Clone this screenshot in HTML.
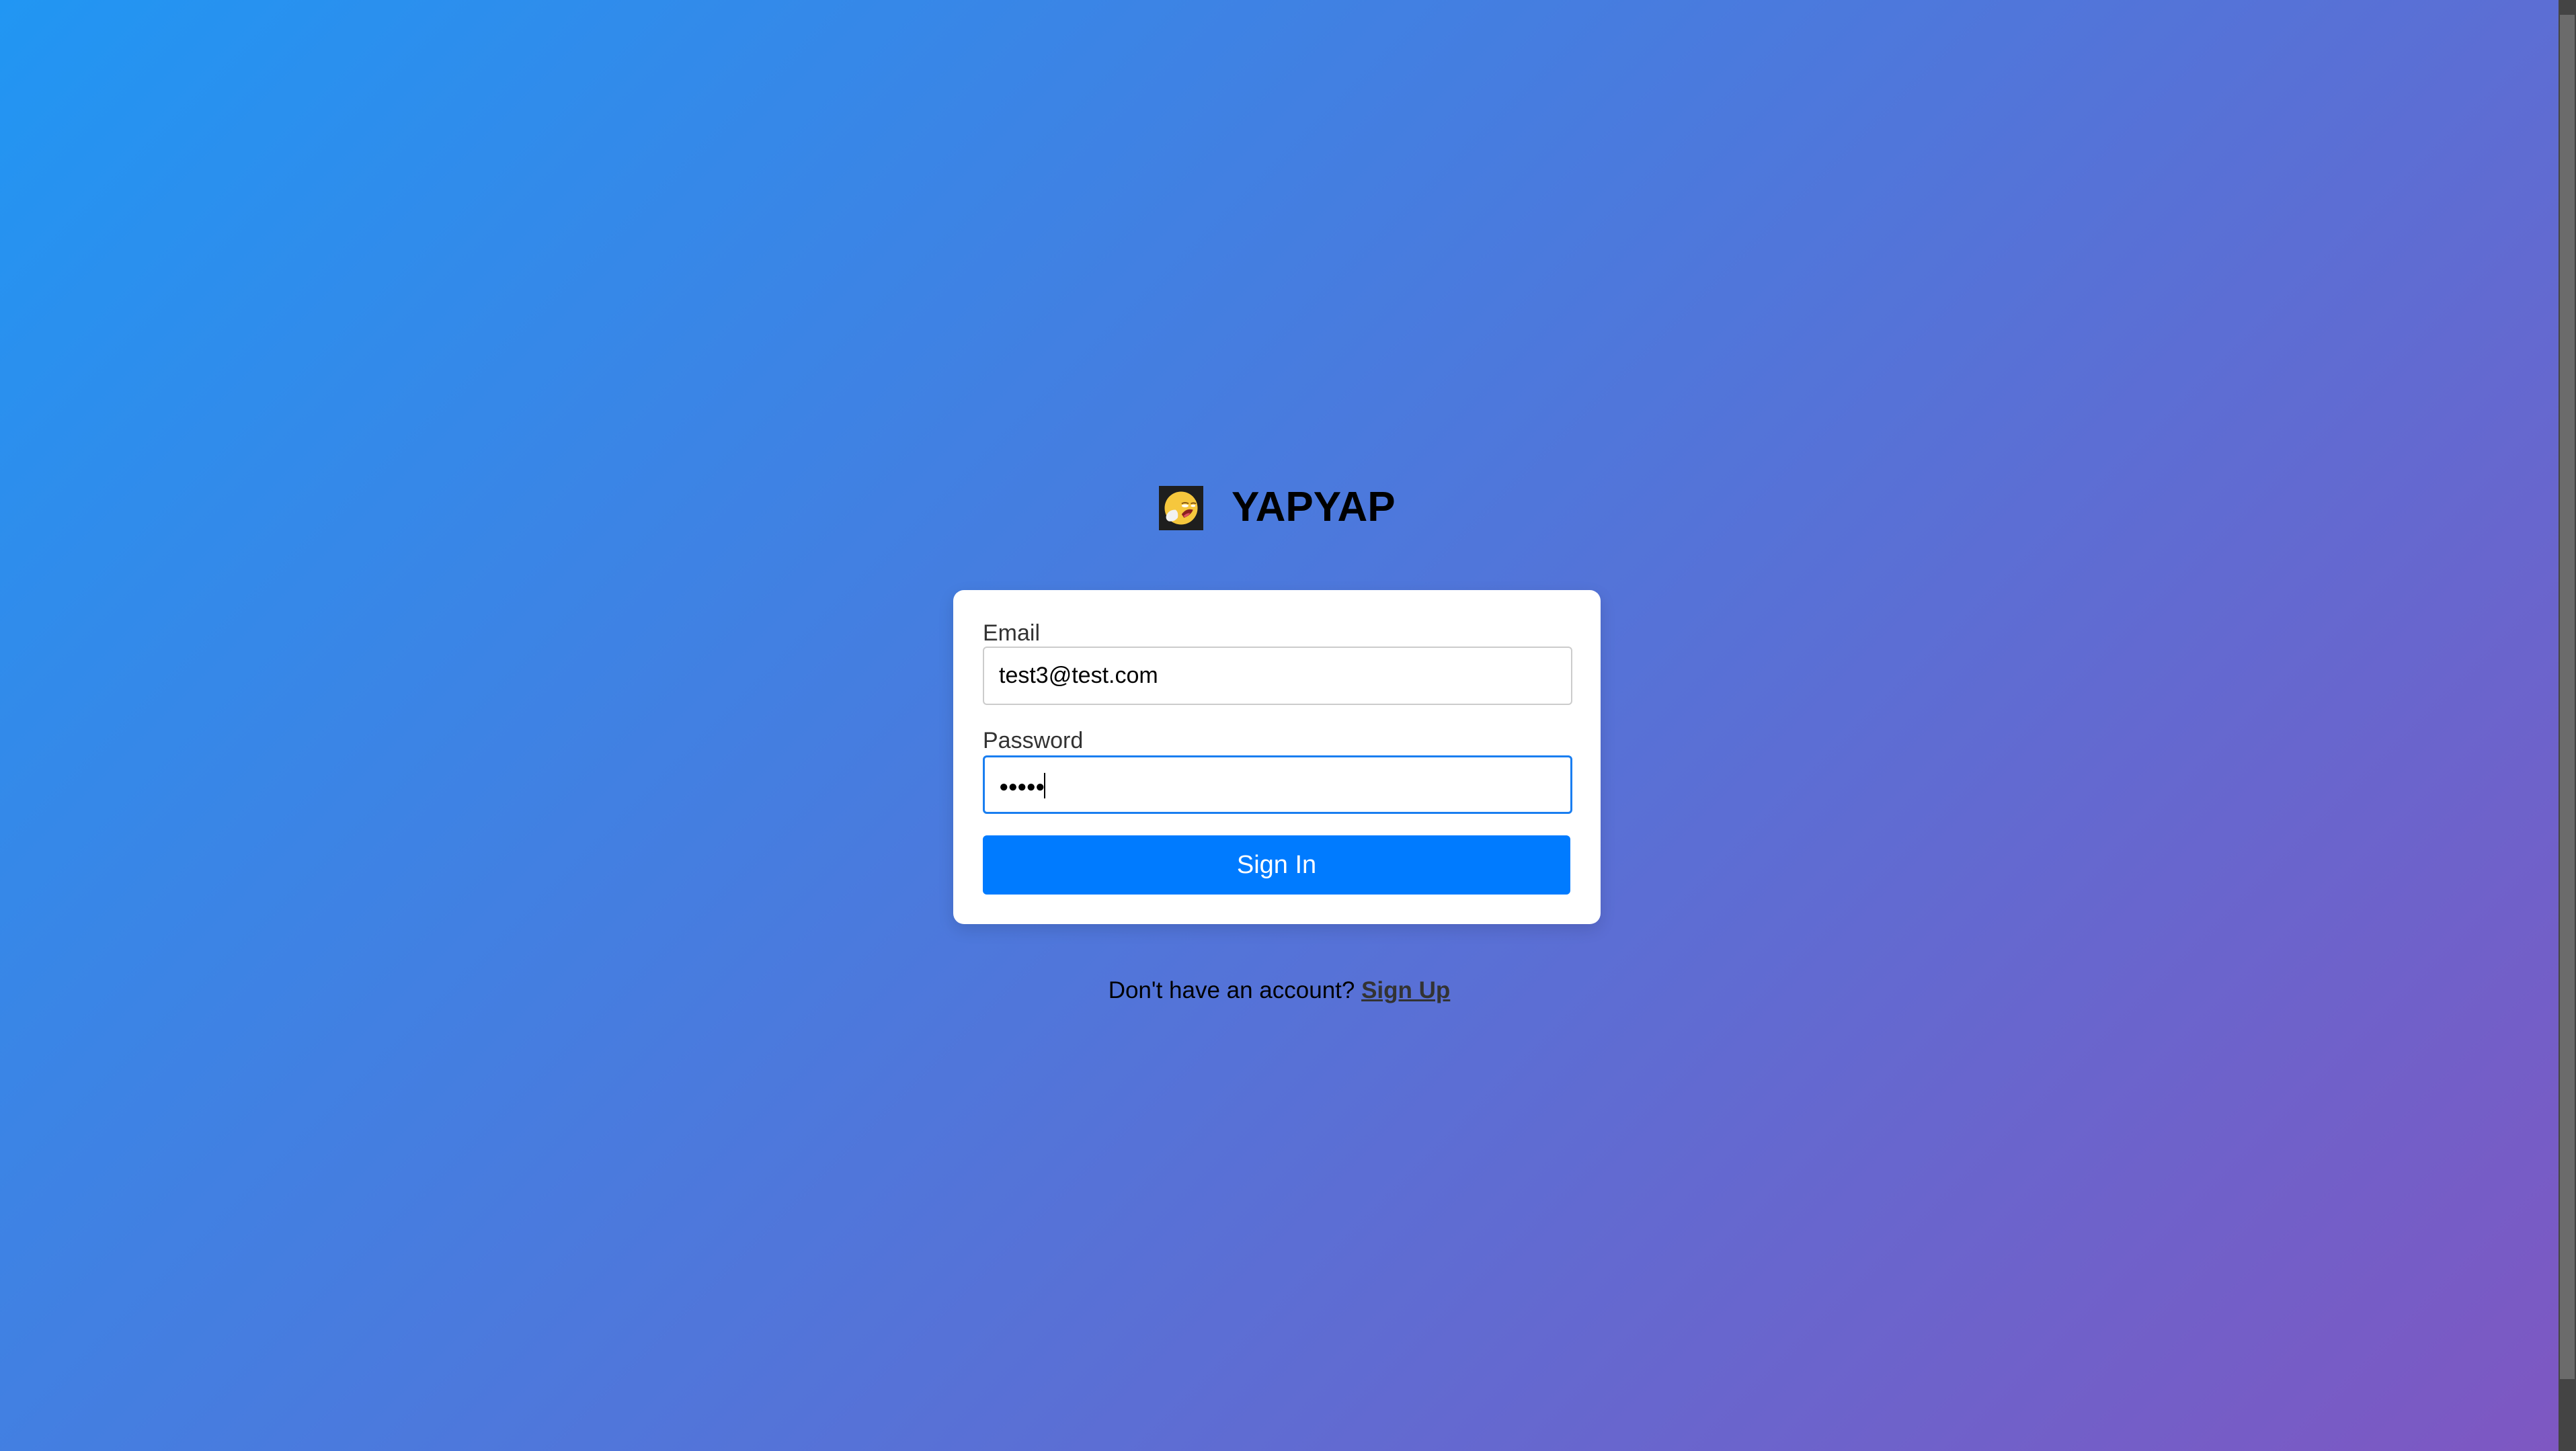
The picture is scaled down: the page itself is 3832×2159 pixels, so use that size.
<!DOCTYPE html>
<html><head><meta charset="utf-8"><style>
*{box-sizing:border-box;margin:0;padding:0}
html,body{width:3832px;height:2159px;overflow:hidden}
body{font-family:"Liberation Sans",Arial,sans-serif;position:relative;background:#444}
.bg{position:absolute;left:0;top:0;width:3806px;height:2159px;background:linear-gradient(135deg,#2196F3 0%,#7E57C2 100%)}
.sb{position:absolute;left:3806px;top:0;width:26px;height:2159px;background:#444}
.thumb{position:absolute;left:3808px;top:22px;width:22px;height:2030px;background:#6b6b6b}
.logo{position:absolute;left:1724px;top:723px;width:66px;height:66px;background:#1e1e1e}
.title{position:absolute;left:1832px;top:712px;font-size:62px;font-weight:bold;color:#000;line-height:86px}
.card{position:absolute;left:1418px;top:878px;width:963px;height:497px;background:#fff;border-radius:16px;box-shadow:0 8px 24px rgba(0,0,0,.12)}
.lbl{position:absolute;left:1462px;font-size:34px;color:#333;line-height:40px}
.inp{position:absolute;left:1462px;width:877px;height:87px;border:2px solid #ccc;border-radius:6px;background:#fff;font-size:34px;color:#000;padding-left:22px;line-height:83px}
.inp.f{border:3px solid #1a7ef0;padding-left:21px;line-height:81px}
.btn{position:absolute;left:1462px;top:1243px;width:874px;height:88px;background:#007bff;border-radius:6px;color:#fff;font-size:38px;text-align:center;line-height:88px}
.foot{position:absolute;left:0;width:3806px;top:1452px;text-align:center;font-size:35px;color:#000;line-height:44px}
.foot b{color:#333;text-decoration:underline}
</style></head><body>
<div class="bg"></div>
<div class="sb"></div><div class="thumb"></div>
<div class="logo"><svg width="66" height="66" viewBox="0 0 78 78">
<circle cx="39" cy="39" r="29" fill="#f6c73d"/>
<path d="M40 31 q6-3 12 0 M56 31 q5-2 9 0" stroke="#7a4a10" stroke-width="2" fill="none"/>
<ellipse cx="46" cy="35" rx="6" ry="2.5" fill="#fff"/><ellipse cx="60" cy="35" rx="4" ry="2" fill="#fff"/>
<path d="M40 50 q8-12 20-8 q-4 10-16 14z" fill="#8a1f1f"/><path d="M43 53 q6-6 12-5 q-4 6-10 7z" fill="#e05060"/>
<path d="M13 52 q4-10 16-10 q6 4 4 14 q-6 8-16 6 q-6-3-4-10z" fill="#f2f2f2"/>
</svg></div>
<div class="title">YAPYAP</div>
<div class="card"></div>
<div class="lbl" style="top:922px">Email</div>
<div class="inp" style="top:962px">test3@test.com</div>
<div class="lbl" style="top:1082px">Password</div>
<div class="inp f" style="top:1124px"><span style="font-size:24px;letter-spacing:-1px">●●●●●</span><span style="display:inline-block;width:2px;height:38px;background:#000;vertical-align:middle"></span></div>
<div class="btn">Sign In</div>
<div class="foot">Don't have an account? <b>Sign Up</b></div>
</body></html>
